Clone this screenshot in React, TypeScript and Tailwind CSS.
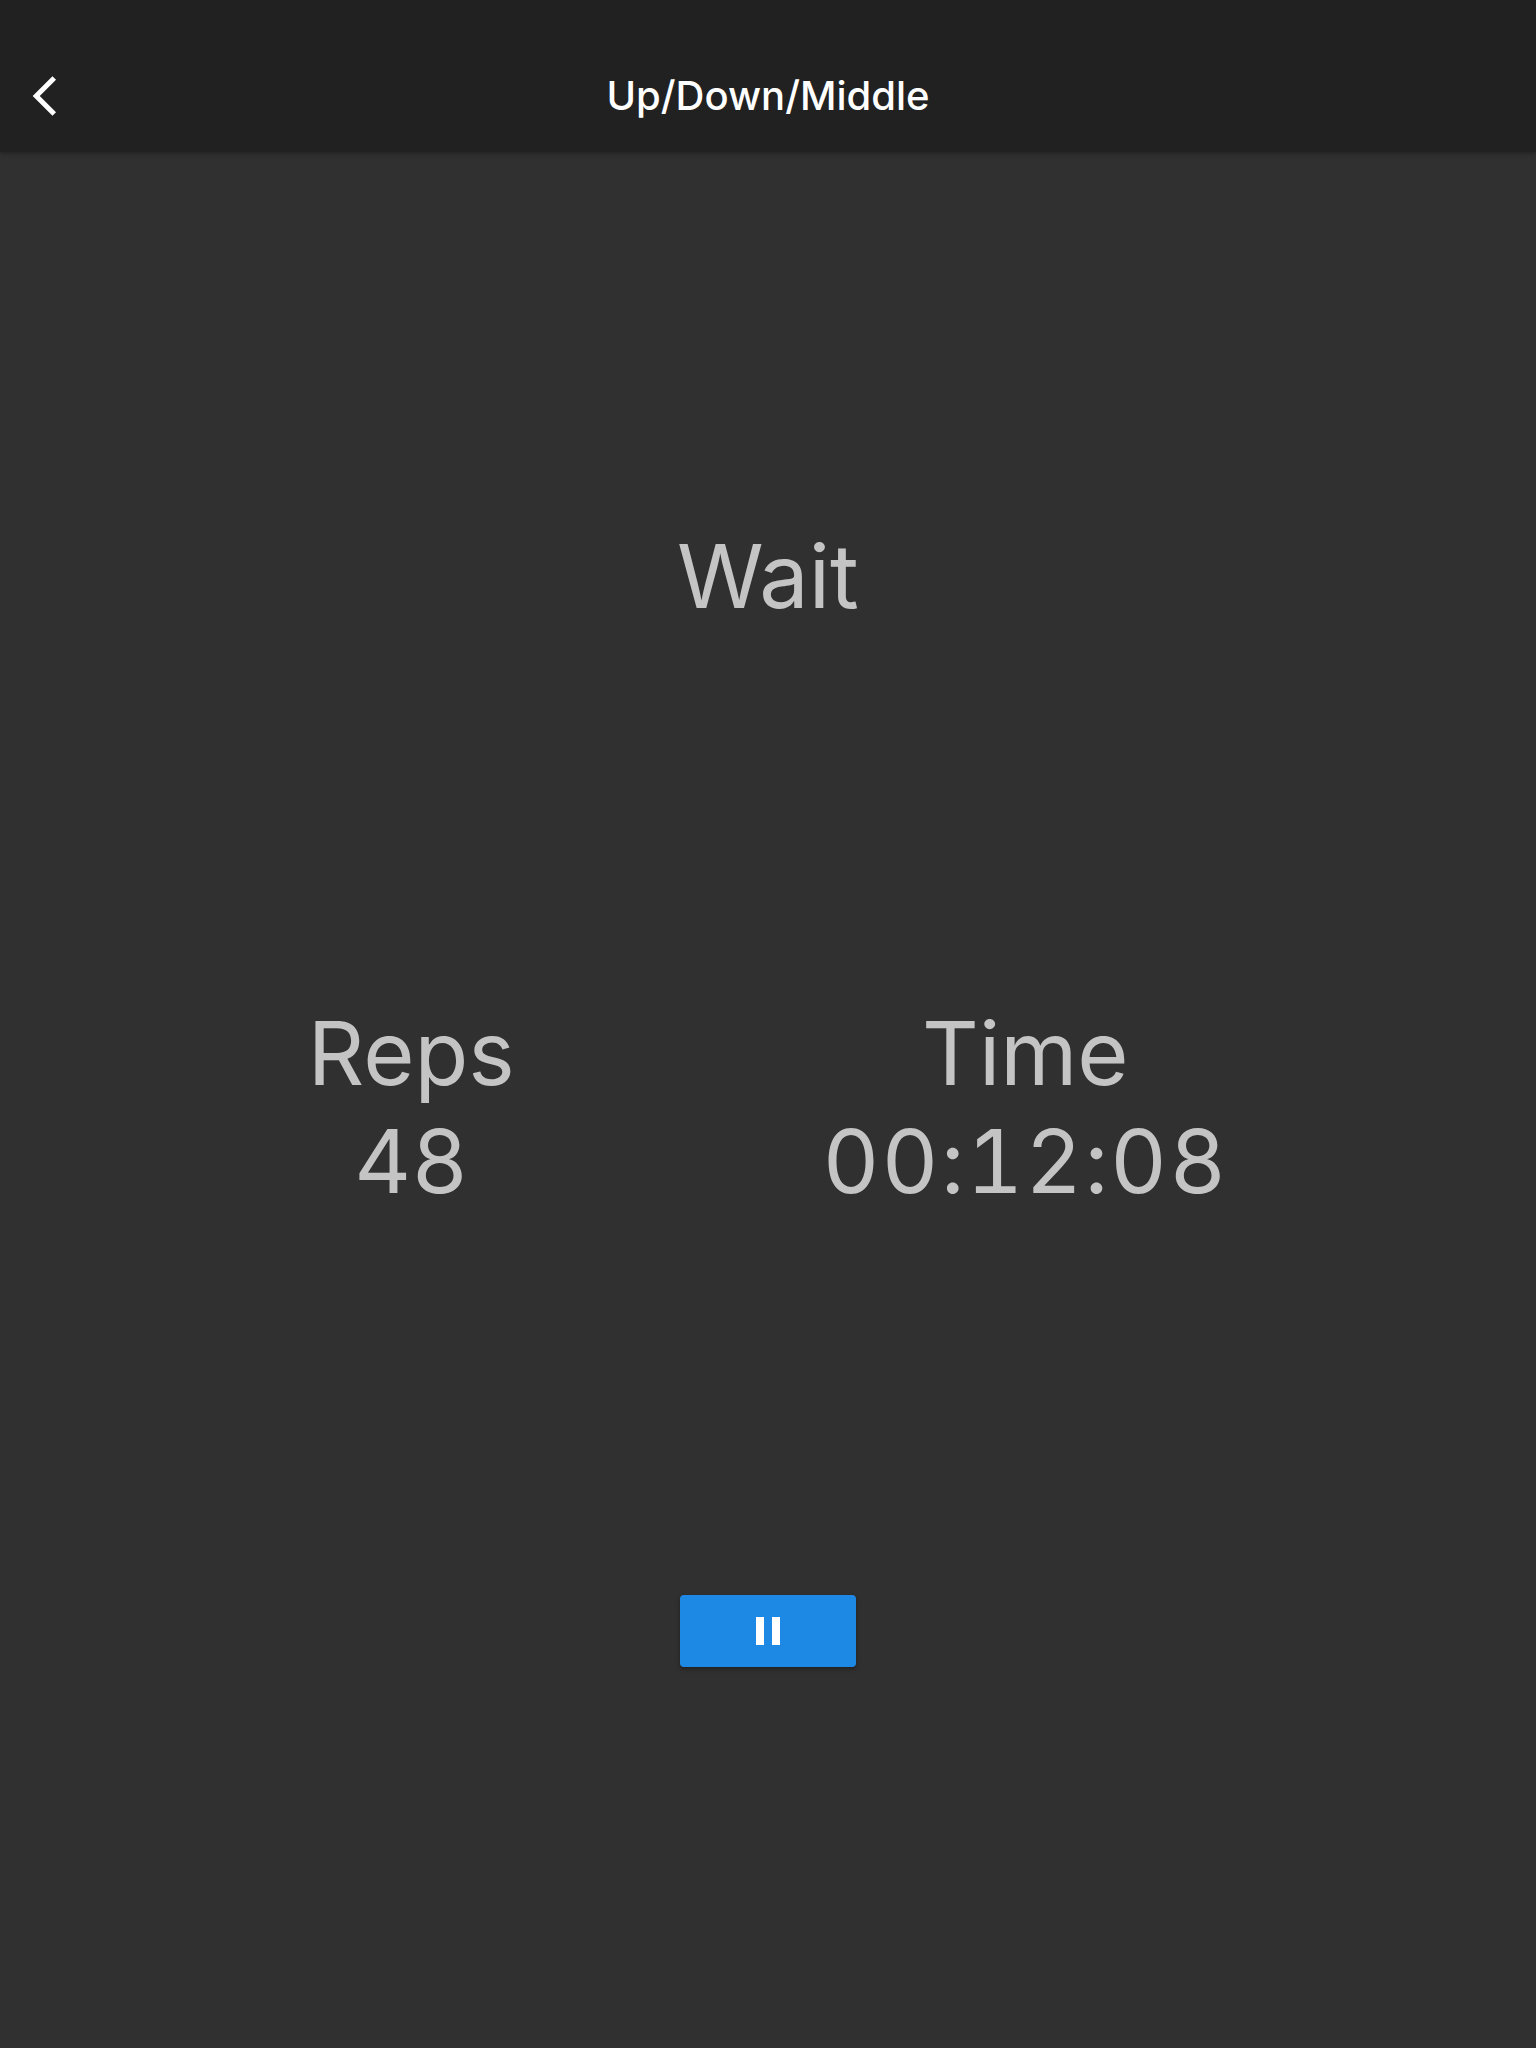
import React from 'react';

const font = { fontFamily: 'Inter, Roboto, "Noto Sans", sans-serif' };

const App: React.FC = () => {
  return (
    <div className="w-[1536px] h-[2048px] bg-[#303030] flex flex-col" style={font}>
      <header className="bg-[#212121] pt-[40px] shadow-[0_2px_4px_rgba(0,0,0,0.25)] relative z-10">
        <div className="relative h-[112px] flex items-center justify-center">
          <button className="absolute left-[21px] top-[32px] w-[48px] h-[48px]">
            <svg viewBox="0 0 24 24" className="w-[48px] h-[48px]" fill="#ffffff">
              <path d="M17.51 3.87L15.73 2.1 5.84 12l9.9 9.9 1.77-1.77L9.38 12l8.13-8.13z" />
            </svg>
          </button>
          <h1 className="text-[40px] leading-[48px] font-medium text-white">Up/Down/Middle</h1>
        </div>
      </header>

      <main className="flex flex-col items-center text-[#c4c4c4] text-[88px] leading-[108px]">
        <div className="mt-[370px]">Wait</div>

        <div className="mt-[369px] w-full flex justify-evenly">
          <div className="flex flex-col items-center">
            <span>Reps</span>
            <span className="tabular-nums">48</span>
          </div>
          <div className="flex flex-col items-center">
            <span>Time</span>
            <span className="tabular-nums tracking-[2px]">00:12:08</span>
          </div>
        </div>

        <button className="mt-[380px] w-[176px] h-[72px] rounded-[4px] bg-[#1e88e5] flex items-center justify-center shadow-[0_2px_4px_rgba(0,0,0,0.35)]">
          <svg viewBox="0 0 24 24" className="w-[48px] h-[48px]" fill="#ffffff">
            <path d="M6 19h4V5H6v14zm8-14v14h4V5h-4z" />
          </svg>
        </button>
      </main>
    </div>
  );
};

export default App;
